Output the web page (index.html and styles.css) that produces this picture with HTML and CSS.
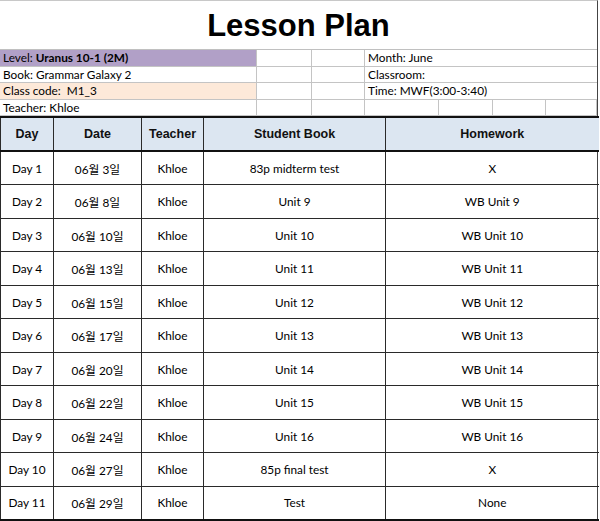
FILE: index.html
```html
<!DOCTYPE html>
<html>
<head>
<meta charset="utf-8">
<link rel="stylesheet" href="styles.css">
</head>
<body>
<div class="sheet">
  <div class="title">Lesson Plan</div>
  <div class="info">
    <div class="c a level">Level: <b>Uranus 10-1 (2M)</b></div>
    <div class="c"></div>
    <div class="c"></div>
    <div class="c wide">Month: June</div>

    <div class="c a">Book: Grammar Galaxy 2</div>
    <div class="c"></div>
    <div class="c"></div>
    <div class="c wide">Classroom:</div>

    <div class="c a code">Class code:&nbsp; M1_3</div>
    <div class="c"></div>
    <div class="c"></div>
    <div class="c wide">Time: MWF(3:00-3:40)</div>

    <div class="c a">Teacher: Khloe</div>
    <div class="c"></div>
    <div class="c"></div>
    <div class="c"></div>
    <div class="c"></div>
    <div class="c"></div>
    <div class="c"></div>
    <div class="c"></div>
  </div>
  <table class="plan">
    <colgroup>
      <col class="w-day"><col class="w-date"><col class="w-teacher"><col class="w-book"><col class="w-hw">
    </colgroup>
    <thead>
      <tr><th>Day</th><th>Date</th><th>Teacher</th><th>Student Book</th><th>Homework</th></tr>
    </thead>
    <tbody>
      <tr><td>Day 1</td><td>06월 3일</td><td>Khloe</td><td>83p midterm test</td><td>X</td></tr>
      <tr><td>Day 2</td><td>06월 8일</td><td>Khloe</td><td>Unit 9</td><td>WB Unit 9</td></tr>
      <tr><td>Day 3</td><td>06월 10일</td><td>Khloe</td><td>Unit 10</td><td>WB Unit 10</td></tr>
      <tr><td>Day 4</td><td>06월 13일</td><td>Khloe</td><td>Unit 11</td><td>WB Unit 11</td></tr>
      <tr><td>Day 5</td><td>06월 15일</td><td>Khloe</td><td>Unit 12</td><td>WB Unit 12</td></tr>
      <tr><td>Day 6</td><td>06월 17일</td><td>Khloe</td><td>Unit 13</td><td>WB Unit 13</td></tr>
      <tr><td>Day 7</td><td>06월 20일</td><td>Khloe</td><td>Unit 14</td><td>WB Unit 14</td></tr>
      <tr><td>Day 8</td><td>06월 22일</td><td>Khloe</td><td>Unit 15</td><td>WB Unit 15</td></tr>
      <tr><td>Day 9</td><td>06월 24일</td><td>Khloe</td><td>Unit 16</td><td>WB Unit 16</td></tr>
      <tr><td>Day 10</td><td>06월 27일</td><td>Khloe</td><td>85p final test</td><td>X</td></tr>
      <tr><td>Day 11</td><td>06월 29일</td><td>Khloe</td><td>Test</td><td>None</td></tr>
    </tbody>
  </table>
</div>
</body>
</html>
```

FILE: styles.css
```css
* { box-sizing: border-box; }
html, body { margin: 0; padding: 0; background: #fff; }
body { width: 600px; height: 521px; overflow: hidden; }

.sheet {
  width: 598px;
  border-top: 1px solid #c8c8c8;
  border-right: 1px solid #444;
  font-family: "Lato", "Noto Sans CJK KR", sans-serif;
  font-size: 11.8px;
  color: #000;
}

.title {
  height: 48px;
  line-height: 50px;
  text-align: center;
  font-family: "Liberation Sans", Arial, sans-serif;
  font-weight: bold;
  font-size: 31px;
  color: #000;
}

.info {
  display: grid;
  grid-template-columns: 257px 55px 53px 20px 54px 54px 53px 51px;
  grid-auto-rows: 16.6px;
  border-top: 1px solid #c0c0c0;
}
.c {
  border-right: 1px solid #c4c4c4;
  border-bottom: 1px solid #c4c4c4;
  padding-left: 3px;
  line-height: 16px;
  white-space: nowrap;
  overflow: hidden;
}
.c:nth-child(8n) { border-right: none; }
.info .wide { grid-column: span 5; border-right: none; }
.level { background: #b1a0c7; }
.code { background: #fde9d9; }

.plan {
  width: 598px;
  border-collapse: collapse;
  table-layout: fixed;
}
.w-day { width: 53px; }
.w-date { width: 88px; }
.w-teacher { width: 62px; }
.w-book { width: 182px; }
.w-hw { width: 213px; }

.plan th, .plan td {
  border: 1px solid #2a2a2a;
  text-align: center;
  padding: 0;
}
.plan th {
  background: #dce6f1;
  height: 34px;
  font-family: "Liberation Sans", Arial, sans-serif;
  font-weight: bold;
  font-size: 12.5px;
  color: #111;
  border-top: 2px solid #111;
  border-bottom: 2px solid #111;
}
.plan td {
  height: 33.5px;
}
.plan tbody tr:last-child td { border-bottom: 2px solid #111; }
.plan tr > :first-child { border-left: 1px solid #2a2a2a; }
.plan tr > :last-child { border-right: none; }
```
